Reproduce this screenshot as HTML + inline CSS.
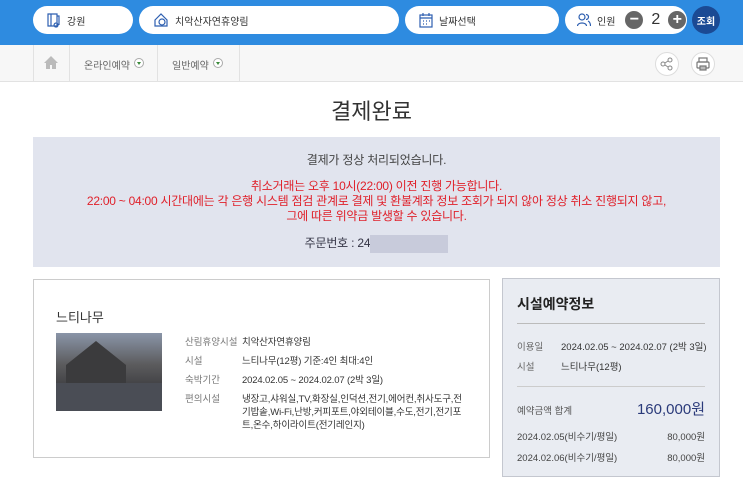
<!DOCTYPE html><html><head><meta charset="utf-8"><style>
*{margin:0;padding:0;box-sizing:border-box}
body{width:743px;height:483px;overflow:hidden;background:#fff;font-family:"Liberation Sans","Noto Sans CJK KR",sans-serif;color:#333;position:relative}
.a{position:absolute}
.top{left:0;top:0;width:743px;height:45px;background:#2e8be0}
.pill{background:#fff;border-radius:14px;height:28px;top:6px;font-size:10px;display:flex;align-items:center;padding-left:14px;gap:6px;color:#333}
.nav{left:0;top:45px;width:743px;height:37px;background:#f7f7f7;border-bottom:1px solid #e2e2e2}
.sep{top:45px;width:1px;height:37px;background:#e2e2e2}
.circ{width:24px;height:24px;border-radius:50%;background:#fff;border:1px solid #ddd;top:52px}
</style></head><body>
<div class="a top"></div>
<div class="a pill" style="left:33px;width:100px"><svg width="14" height="16" viewBox="0 0 14 16" fill="none" stroke="#2e5fb0" stroke-width="1.2"><path d="M1 2h9v12H1zM4 2v12M10 4h2v9M9 11a2 2 0 1 0 .1 0"/></svg>강원</div>
<div class="a pill" style="left:139px;width:260px"><svg width="16" height="16" viewBox="0 0 16 16" fill="none" stroke="#2e5fb0" stroke-width="1.2"><path d="M2 8L8 2l6 6v6H2z"/><circle cx="9" cy="10" r="3"/></svg>치악산자연휴양림</div>
<div class="a pill" style="left:405px;width:154px"><svg width="14" height="16" viewBox="0 0 14 16" fill="none" stroke="#2e5fb0" stroke-width="1.2"><rect x="1" y="3" width="12" height="12"/><path d="M4 1v3M10 1v3M1 6h12M4 9h1M7 9h1M10 9h1M4 12h1M7 12h1"/></svg>날짜선택</div>
<div class="a pill" style="left:565px;width:122px;padding-left:12px"><svg width="14" height="14" viewBox="0 0 14 14" fill="none" stroke="#2e5fb0" stroke-width="1.2"><circle cx="5" cy="4" r="3"/><path d="M0.5 13c0-4 9-4 9 0M9 1.5a2.5 2.5 0 0 1 0 5M11 8c2 1 2.5 3 2.5 5"/></svg><span>인원</span>
<span style="width:18px;height:18px;border-radius:50%;background:#666;color:#fff;display:inline-flex;align-items:center;justify-content:center;font-size:16px;font-weight:bold;margin-left:4px">−</span><span style="font-size:16px;margin:0 2px">2</span><span style="width:18px;height:18px;border-radius:50%;background:#666;color:#fff;display:inline-flex;align-items:center;justify-content:center;font-size:16px;font-weight:bold">+</span></div>
<div class="a" style="left:692px;top:6px;width:28px;height:28px;border-radius:50%;background:#1b4a94;color:#fff;font-size:10px;font-weight:bold;display:flex;align-items:center;justify-content:center">조회</div>
<div class="a nav"></div>
<div class="a sep" style="left:33px"></div><div class="a sep" style="left:69px"></div><div class="a sep" style="left:157px"></div><div class="a sep" style="left:239px"></div>
<svg class="a" style="left:44px;top:56px" width="14" height="13" viewBox="0 0 14 13"><path d="M7 0L0 7h2v6h4V9h2v4h4V7h2z" fill="#bbb"/></svg>
<div class="a" style="left:84px;top:57px;font-size:10px;color:#666">온라인예약</div>
<div class="a" style="left:134px;top:58px;width:10px;height:10px;border-radius:50%;border:1px solid #aaa;background:#fff"><div style="margin:3px 0 0 2px;border-left:2.5px solid transparent;border-right:2.5px solid transparent;border-top:3px solid #3a8a3a;width:0"></div></div>
<div class="a" style="left:172px;top:57px;font-size:10px;color:#666">일반예약</div>
<div class="a" style="left:213px;top:58px;width:10px;height:10px;border-radius:50%;border:1px solid #aaa;background:#fff"><div style="margin:3px 0 0 2px;border-left:2.5px solid transparent;border-right:2.5px solid transparent;border-top:3px solid #3a8a3a;width:0"></div></div>
<div class="a circ" style="left:655px"><svg width="22" height="22" viewBox="0 0 22 22" fill="none" stroke="#888"><circle cx="14" cy="7" r="2"/><circle cx="7" cy="11" r="2"/><circle cx="14" cy="15" r="2"/><path d="M9 10l3-2M9 12l3 2"/></svg></div>
<div class="a circ" style="left:691px"><svg width="22" height="22" viewBox="0 0 22 22" fill="none" stroke="#777" stroke-width="1.2"><rect x="7" y="5" width="8" height="4"/><rect x="5" y="9" width="12" height="6" rx="1"/><rect x="8" y="13" width="6" height="4" fill="#bbb"/></svg></div>
<div class="a" style="left:0;width:743px;top:94px;text-align:center;font-size:22px;color:#333">결제완료</div>
<div class="a" style="left:33px;top:137px;width:687px;height:130px;background:#e1e4ee;text-align:center;font-size:12px;line-height:15px">
<div style="margin-top:16px;color:#444;letter-spacing:-0.2px">결제가 정상 처리되었습니다.</div>
<div style="margin-top:11px;color:#e0202a;font-size:12px;letter-spacing:-0.25px">취소거래는 오후 10시(22:00) 이전 진행 가능합니다.<br>22:00 ~ 04:00 시간대에는 각 은행 시스템 점검 관계로 결제 및 환불계좌 정보 조회가 되지 않아 정상 취소 진행되지 않고,<br>그에 따른 위약금 발생할 수 있습니다.</div>
<div style="margin-top:11px;color:#334;letter-spacing:-0.2px"><span>주문번호 : 24</span><span style="display:inline-block;width:78px;height:18px;background:#c8cbdb;vertical-align:middle"></span></div>
</div>
<div class="a" style="left:33px;top:279px;width:457px;height:179px;border:1px solid #ccc"></div>
<div class="a" style="left:56px;top:307px;font-size:13px;color:#333">느티나무</div>
<div class="a" style="left:56px;top:333px;width:106px;height:78px;background:linear-gradient(180deg,#8a95a8 0%,#5c5c5e 40%,#3f3f42 70%,#c8ccd4 100%)"><div style="position:absolute;left:10px;top:8px;width:60px;height:60px;background:#3b3b3d;clip-path:polygon(50% 0,100% 40%,100% 100%,0 100%,0 40%)"></div><div style="position:absolute;left:0;top:50px;width:106px;height:28px;background:#4a4d55"></div></div>
<div class="a" style="left:185px;top:333px;font-size:9.5px;color:#777;line-height:19px">산림휴양시설<br>시설<br>숙박기간<br>편의시설</div>
<div class="a" style="left:242px;top:333px;font-size:9.5px;color:#333;line-height:19px;width:226px;letter-spacing:-0.15px">치악산자연휴양림<br>느티나무(12평) 기준:4인 최대:4인<br>2024.02.05 ~ 2024.02.07 (2박 3일)<br><div style="line-height:13px;margin-top:3px">냉장고,샤워실,TV,화장실,인덕션,전기,에어컨,취사도구,전기밥솥,Wi-Fi,난방,커피포트,야외테이블,수도,전기,전기포트,온수,하이라이트(전기레인지)</div></div>
<div class="a" style="left:502px;top:278px;width:218px;height:199px;background:#e9ecf2;border:1px solid #c4c7cf"></div>
<div class="a" style="left:517px;top:294px;font-size:14px;font-weight:bold;color:#222">시설예약정보</div>
<div class="a" style="left:517px;top:323px;width:188px;height:1px;background:#bbb"></div>
<div class="a" style="left:517px;top:338px;font-size:9.5px;color:#666;line-height:20px">이용일<br>시설</div>
<div class="a" style="left:561px;top:338px;font-size:9.5px;color:#333;line-height:20px">2024.02.05 ~ 2024.02.07 (2박 3일)<br>느티나무(12평)</div>
<div class="a" style="left:517px;top:386px;width:188px;height:1px;background:#ccc"></div>
<div class="a" style="left:517px;top:403px;font-size:9.5px;color:#555">예약금액 합계</div>
<div class="a" style="left:600px;top:398px;width:105px;text-align:right;font-size:15px;color:#2a3a7a">160,000원</div>
<div class="a" style="left:517px;top:427px;font-size:9.5px;color:#444;line-height:21px">2024.02.05(비수기/평일)<br>2024.02.06(비수기/평일)</div>
<div class="a" style="left:620px;top:427px;width:85px;text-align:right;font-size:9.5px;color:#444;line-height:21px">80,000원<br>80,000원</div>
</body></html>
